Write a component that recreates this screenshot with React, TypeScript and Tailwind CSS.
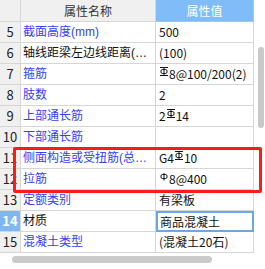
const font = { fontFamily: '"Noto Sans CJK SC", "Liberation Sans", sans-serif' };

type Sym = "c" | "a";

const Rebar = ({ kind }: { kind: Sym }) => (
  <svg width="8" height="9" viewBox="0 0 8 9" className="inline-block align-top mt-[3px] mx-[1px]">
    {kind === "c" && <line x1="0" y1="0.5" x2="8" y2="0.5" stroke="#111" strokeWidth="1" />}
    <rect x="1" y="2.5" width="6" height="4" rx="1.5" fill="none" stroke="#111" strokeWidth="1" />
    <line x1="4" y1={kind === "c" ? 0.5 : 1} x2="4" y2="8.5" stroke="#111" strokeWidth="1" />
    {kind === "c" && <line x1="0" y1="8.5" x2="8" y2="8.5" stroke="#111" strokeWidth="1" />}
  </svg>
);

const rows = [
  { no: 5, name: "截面高度(mm)", blue: true, value: <>500</> },
  { no: 6, name: "轴线距梁左边线距离(mm)", blue: false, value: <>(100)</> },
  { no: 7, name: "箍筋", blue: true, value: <><Rebar kind="c" />8@100/200(2)</> },
  { no: 8, name: "肢数", blue: true, value: <>2</> },
  { no: 9, name: "上部通长筋", blue: true, value: <>2<Rebar kind="c" />14</> },
  { no: 10, name: "下部通长筋", blue: true, value: <></> },
  { no: 11, name: "侧面构造或受扭筋(总配筋值)", blue: true, value: <>G4<Rebar kind="c" />10</> },
  { no: 12, name: "拉筋", blue: true, value: <><Rebar kind="a" />8@400</> },
  { no: 13, name: "定额类别", blue: true, value: <>有梁板</> },
  { no: 14, name: "材质", blue: false, value: <>商品混凝土</>, selected: true },
  { no: 15, name: "混凝土类型", blue: true, value: <>(混凝土20石)</> },
];

const App = () => {
  return (
    <div className="relative w-[265px] h-[269px] bg-white overflow-hidden text-[12px] text-[#111]" style={font}>
      <div className="flex">
        <div className="w-[254px]">
          {/* header */}
          <div className="flex h-[22px]">
            <div className="w-[21px] bg-[#f0f0f0] border-r border-b border-[#d6d6d6]" />
            <div className="w-[135px] bg-[#f0f0f0] border-r border-b border-[#d6d6d6] flex items-center justify-center text-[#333]">
              属性名称
            </div>
            <div className="w-[98px] bg-[#80bcf7] border-r border-b border-[#9cc8f2] flex items-center justify-center text-white">
              属性值
            </div>
          </div>
          {rows.map((r) => (
            <div key={r.no} className="flex h-[21px]">
              <div
                className={
                  r.selected
                    ? "w-[21px] bg-[#7db8f3] border-r border-b border-[#d6d6d6] flex items-center justify-center text-white font-bold text-[13px]"
                    : "w-[21px] bg-[#f0f0f0] border-r border-b border-[#d6d6d6] flex items-center justify-center text-[#222] text-[13px]"
                }
              >
                {r.no}
              </div>
              <div
                className={
                  r.blue
                    ? "w-[135px] border-r border-b border-[#d6d6d6] pl-[2px] leading-[20px] truncate font-['Liberation_Sans','Noto_Sans_CJK_SC',sans-serif] text-[#3540f2]"
                    : "w-[135px] border-r border-b border-[#d6d6d6] pl-[2px] leading-[20px] truncate font-['Liberation_Sans','Noto_Sans_CJK_SC',sans-serif] text-[#111]"
                }
              >
                {r.name}
              </div>
              <div
                className={
                  r.selected
                    ? "w-[98px] border-2 border-[#6da7e3] pl-[2px] leading-[17px] whitespace-nowrap"
                    : "w-[98px] border-r border-b border-[#d6d6d6] pl-[3px] leading-[20px] whitespace-nowrap"
                }
              >
                {r.value}
              </div>
            </div>
          ))}
        </div>
        <div className="w-[11px] flex justify-end pr-[1px] pt-[47px]">
          <div className="w-[6px] h-[81px] rounded-full bg-[#c9c9c9]" />
        </div>
      </div>
      <div className="pl-[12px] pt-[3px]">
        <div className="w-[200px] h-[7px] rounded-full bg-[#cacaca]" />
      </div>
      {/* red annotation */}
      <div className="absolute left-[13px] top-[147px] w-[249px] h-[46px] border-[3px] border-[#ff1a1a] rounded-[2px]" />
    </div>
  );
};

export default App;
